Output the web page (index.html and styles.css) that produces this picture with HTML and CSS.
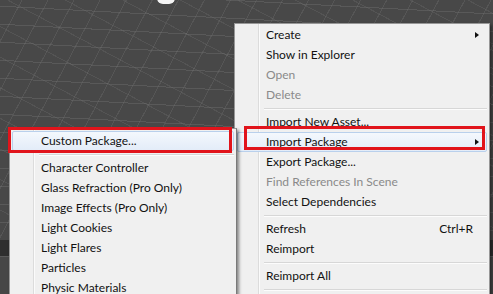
FILE: index.html
```html
<!DOCTYPE html>
<html lang="en">
<head>
    <meta charset="UTF-8">
    <title>Import Package</title>
    <link rel="stylesheet" href="styles.css">
</head>
<body>
    <div class="scene">
        <div class="viewport"><span class="gizmo"></span></div>
        <div class="toolbar"></div>
        <div class="panel"></div>

        <div class="menu main-menu">
            <div class="item has-sub">Create</div>
            <div class="item">Show in Explorer</div>
            <div class="item disabled">Open</div>
            <div class="item disabled">Delete</div>
            <div class="sep"></div>
            <div class="item">Import New Asset...</div>
            <div class="item hover has-sub">Import Package</div>
            <div class="item">Export Package...</div>
            <div class="item disabled">Find References In Scene</div>
            <div class="item">Select Dependencies</div>
            <div class="sep"></div>
            <div class="item">Refresh <span class="key">Ctrl+R</span></div>
            <div class="item">Reimport</div>
            <div class="sep"></div>
            <div class="item">Reimport All</div>
            <div class="sep"></div>
        </div>

        <div class="menu sub-menu">
            <div class="item hover">Custom Package...</div>
            <div class="sep"></div>
            <div class="item">Character Controller</div>
            <div class="item">Glass Refraction (Pro Only)</div>
            <div class="item">Image Effects (Pro Only)</div>
            <div class="item">Light Cookies</div>
            <div class="item">Light Flares</div>
            <div class="item">Particles</div>
            <div class="item">Physic Materials</div>
        </div>

        <div class="mark mark-sub"></div>
        <div class="mark mark-main"></div>
    </div>
</body>
</html>
```
FILE: styles.css
```css
body {
    margin: 0;
    font-family: 'Lato', 'Liberation Sans', sans-serif;
    font-size: 12px;
    overflow: hidden;
}
.scene {
    position: relative;
    width: 493px;
    height: 294px;
    overflow: hidden;
    display: flex;
    flex-direction: column;
    background: #474747;
}
.viewport {
    height: 240px;
    flex-shrink: 0;
    position: relative;
    background-color: #484848;
    background-image:
        repeating-linear-gradient(3deg, transparent 0, transparent 17px, rgba(115, 115, 115, 0.4) 17px, rgba(115, 115, 115, 0.4) 18px),
        repeating-linear-gradient(-62deg, transparent 0, transparent 22px, rgba(115, 115, 115, 0.32) 22px, rgba(115, 115, 115, 0.32) 23px),
        repeating-linear-gradient(28deg, transparent 0, transparent 26px, rgba(115, 115, 115, 0.28) 26px, rgba(115, 115, 115, 0.28) 27px);
}
.gizmo {
    position: absolute;
    left: 157px;
    top: -4px;
    width: 18px;
    height: 8px;
    background: #f4f4f4;
    border-radius: 0 0 6px 6px;
}
.toolbar {
    height: 16px;
    flex-shrink: 0;
    background: #2f2f2f;
    border-bottom: 1px solid #5a5a5a;
}
.panel {
    flex-grow: 1;
    background: #474747;
}
.menu {
    position: absolute;
    background-color: #f0f0f0;
    background-image: linear-gradient(to right, transparent 23px, #dcdcdc 23px, #dcdcdc 24px, #fbfbfb 24px, #fbfbfb 25px, transparent 25px);
    border: 1px solid #979797;
    box-shadow: 2px 2px 3px rgba(0, 0, 0, 0.45);
    padding: 1px 2px;
    color: #121212;
}
.main-menu {
    left: 234px;
    top: 23px;
    width: 250px;
    height: 290px;
}
.sub-menu {
    left: 9px;
    top: 128px;
    width: 222px;
    height: 180px;
    padding-top: 2px;
    border-right-color: #7a7a7a;
}
.item {
    height: 20px;
    line-height: 20px;
    padding-left: 29px;
    padding-right: 14px;
    position: relative;
    white-space: nowrap;
}
.item.disabled {
    color: #8a8a8a;
}
.item.hover {
    background: linear-gradient(#f4f8fd, #e3ecf8);
    border: 1px solid #b9d0ec;
    border-radius: 2px;
    height: 18px;
    line-height: 18px;
    padding-left: 28px;
}
.has-sub::after {
    content: '';
    position: absolute;
    right: 8px;
    top: 7px;
    border-left: 4px solid #111;
    border-top: 3.5px solid transparent;
    border-bottom: 3.5px solid transparent;
}
.item.hover.has-sub::after {
    top: 6px;
    right: 7px;
}
.key {
    position: absolute;
    right: 14px;
}
.sep {
    height: 0;
    margin: 3px 0 2px 27px;
    border-top: 1px solid #d7d7d7;
    border-bottom: 1px solid #fcfcfc;
}
.mark {
    position: absolute;
    border: 3px solid #e1141b;
}
.mark-sub {
    left: 8px;
    top: 127px;
    width: 218px;
    height: 20px;
}
.mark-main {
    left: 244px;
    top: 126px;
    width: 235px;
    height: 18px;
}
```
